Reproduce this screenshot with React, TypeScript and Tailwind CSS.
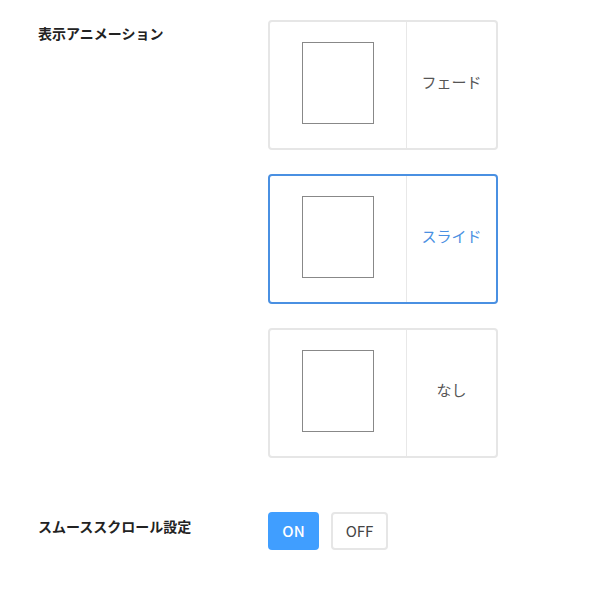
import React, { useState } from "react";

const font = { fontFamily: '"Noto Sans CJK JP", "Noto Sans", sans-serif' };

const options = ["フェード", "スライド", "なし"];

export default function App() {
  const [sel, setSel] = useState(1);
  const [on, setOn] = useState(true);
  return (
    <div className="w-[610px] h-[602px] bg-white pl-[38px] pt-[20px]" style={font}>
      <div className="flex">
        <div className="w-[230px] pt-[3px] text-[14px] leading-[20px] font-bold text-[#222]">
          表示アニメーション
        </div>
        <div className="flex flex-col gap-[24px]">
          {options.map((o, i) => {
            const active = i === sel;
            return (
              <button
                key={o}
                onClick={() => setSel(i)}
                className={`flex w-[230px] h-[130px] rounded-[4px] border-2 bg-white ${
                  active ? "border-[#4a90e2]" : "border-[#e6e6e6]"
                }`}
              >
                <div className="w-[137px] h-full flex items-start justify-center pt-[20px] border-r border-[#e8e8e8]">
                  <div className="w-[72px] h-[82px] border border-[#888]" />
                </div>
                <div
                  className={`flex-1 h-full flex items-center justify-center pb-[5px] text-[15px] ${
                    active ? "text-[#4a90e2]" : "text-[#555]"
                  }`}
                >
                  {o}
                </div>
              </button>
            );
          })}
        </div>
      </div>
      <div className="flex mt-[54px]">
        <div className="w-[230px] pt-[4px] text-[14px] leading-[20px] font-bold text-[#222]">
          スムーススクロール設定
        </div>
        <div className="flex gap-[12px]">
          <button
            onClick={() => setOn(true)}
            className={`w-[51px] h-[38px] rounded-[4px] text-[15px] ${
              on ? "bg-[#409eff] text-white border-0 font-medium" : "bg-white text-[#444] border-2 border-[#e6e6e6]"
            }`}
          >
            ON
          </button>
          <button
            onClick={() => setOn(false)}
            className={`w-[57px] h-[38px] rounded-[4px] text-[15px] ${
              !on ? "bg-[#409eff] text-white border-0 font-medium" : "bg-white text-[#444] border-2 border-[#e6e6e6]"
            }`}
          >
            OFF
          </button>
        </div>
      </div>
    </div>
  );
}
